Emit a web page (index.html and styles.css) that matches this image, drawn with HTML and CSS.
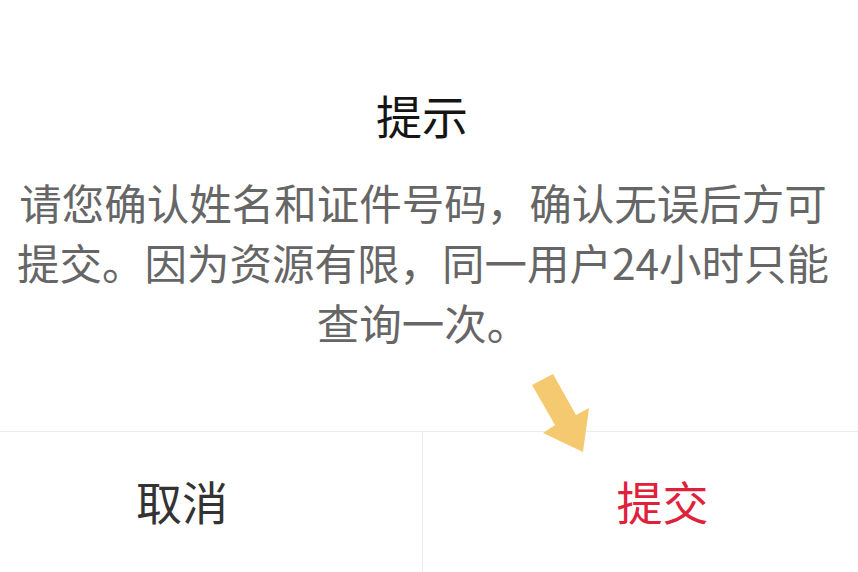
FILE: index.html
```html
<!DOCTYPE html>
<html lang="zh-CN">
<head>
  <meta charset="UTF-8" />
  <meta name="viewport" content="width=device-width, initial-scale=1" />
  <title>提示</title>
  <link rel="stylesheet" href="styles.css">
</head>
<body>
  <div class="dialog" role="dialog" aria-labelledby="dlgTitle">
    <h1 id="dlgTitle" class="dialog-title">提示</h1>
    <p class="dialog-text">请您确认姓名和证件号码，确认无误后方可提交。因为资源有限，同一用户24小时只能查询一次。</p>
    <div class="dialog-actions">
      <button class="btn btn-cancel">取消</button>
      <button class="btn btn-submit">提交</button>
    </div>
  </div>

  <!-- flèche d'annotation -->
  <svg class="hint-arrow" width="70" height="90" viewBox="0 0 70 90" aria-hidden="true">
    <polygon points="2,15 23,4 46,45 59,38 53,82 13,63 25,55" fill="#f5c96f" />
  </svg>
</body>
</html>
```

FILE: styles.css
```css
html, body {
  margin: 0;
  height: 100%;
}
body {
  background: #fff;
  font-family: "Noto Sans CJK SC", "Noto Sans", sans-serif;
  overflow: hidden;
  position: relative;
}
.dialog {
  background: #fff;
}
.dialog-title {
  margin: 0;
  padding: 82px 14px 0 0;
  font-size: 46px;
  font-weight: 400;
  line-height: 64px;
  color: #151515;
  text-align: center;
}
.dialog-text {
  margin: 26px 0 0 0;
  padding: 0 21px 0 9px;
  font-size: 42.5px;
  line-height: 60px;
  color: #666;
  text-align: center;
}
.dialog-actions {
  margin-top: 79px;
  border-top: 1px solid #ececec;
  display: grid;
  grid-template-columns: 422px 1fr;
  height: 140px;
}
.btn {
  background: none;
  border: none;
  font-family: inherit;
  font-size: 46px;
  padding: 0 0 4px 0;
  cursor: pointer;
}
.btn-cancel {
  color: #333;
  padding-right: 58px;
}
.btn-submit {
  color: #e0213b;
  border-left: 1px solid #ececec;
  padding-left: 44px;
}
.hint-arrow {
  position: absolute;
  left: 530px;
  top: 370px;
}
```
